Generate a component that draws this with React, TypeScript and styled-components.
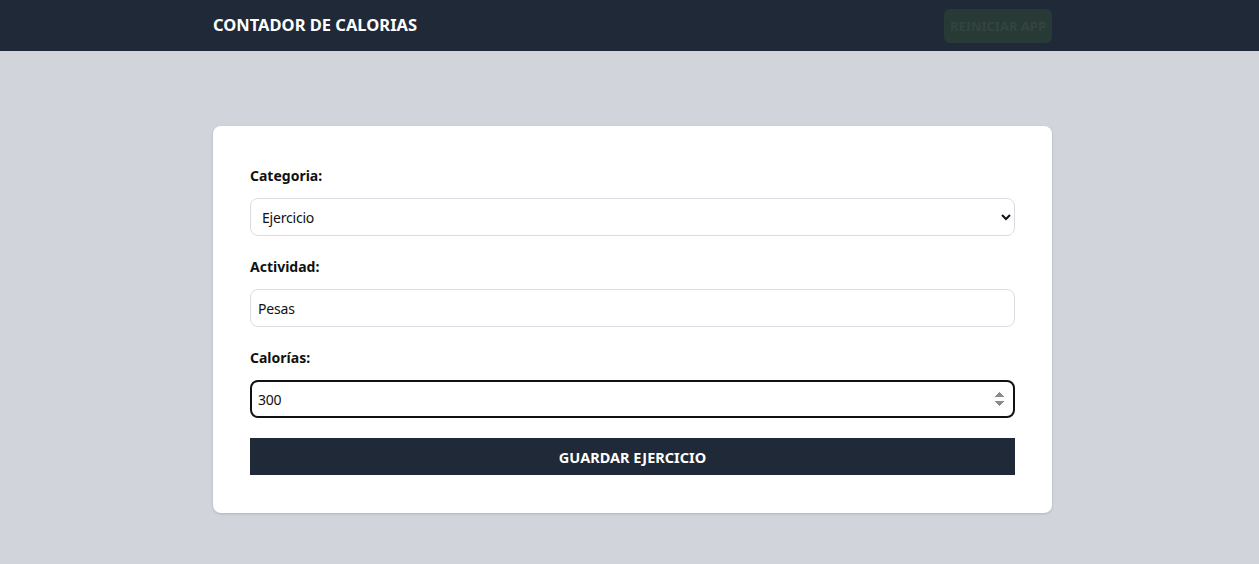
import React, { useState } from "react";
import styled, { createGlobalStyle } from "styled-components";

const GlobalStyle = createGlobalStyle`
  * { box-sizing: border-box; }
  html, body { margin: 0; padding: 0; }
  body {
    background: #d1d5db;
    font-family: "Noto Sans", "Open Sans", sans-serif;
    color: #111827;
    min-height: 100vh;
  }
`;

const Header = styled.header`
  background: #1f2937;
  height: 51px;
  padding-left: 6px;
`;

const HeaderInner = styled.div`
  width: 839px;
  margin: 0 auto;
  height: 100%;
  display: flex;
  align-items: center;
  justify-content: space-between;
  padding-bottom: 3px;
`;

const Title = styled.h1`
  margin: 0;
  color: #ffffff;
  font-size: 16.5px;
  font-weight: 700;
`;

const ResetButton = styled.button`
  width: 108px;
  height: 34px;
  margin-top: 3px;
  border: none;
  border-radius: 6px;
  background: #283a36;
  color: #34443f;
  font-family: inherit;
  font-weight: 700;
  font-size: 13px;
  text-transform: uppercase;
  cursor: default;
`;

const Main = styled.main`
  display: flex;
  justify-content: center;
  padding-top: 75px;
  padding-left: 6px;
`;

const Card = styled.form`
  width: 839px;
  background: #ffffff;
  border-radius: 8px;
  box-shadow: 0 1px 3px rgba(0, 0, 0, 0.1), 0 1px 2px rgba(0, 0, 0, 0.06);
  padding: 40px 37px 38px;
  display: flex;
  flex-direction: column;
  gap: 21px;
`;

const Field = styled.div`
  display: flex;
  flex-direction: column;
  gap: 12px;
`;

const Label = styled.label`
  font-size: 14px;
  line-height: 20px;
  font-weight: 700;
  color: #111111;
`;

const controlBase = `
  width: 100%;
  height: 38px;
  font-family: "Noto Sans", "Open Sans", sans-serif;
  font-size: 14px;
  color: #111111;
  background: #ffffff;
  border-radius: 8px;
  outline: none;
  letter-spacing: -0.2px;
`;

const Select = styled.select`
  ${controlBase}
  border: 1px solid #d9dde3;
  padding: 0 7px;
`;

const Input = styled.input<{ $focused?: boolean }>`
  ${controlBase}
  border: ${(p) => (p.$focused ? "2px solid #111111" : "1px solid #d9dde3")};
  padding: ${(p) => (p.$focused ? "0 6px" : "0 7px")};

  &::-webkit-inner-spin-button,
  &::-webkit-outer-spin-button {
    opacity: 1;
  }
`;

const Submit = styled.button`
  margin-top: -1px;
  height: 37px;
  width: 100%;
  border: none;
  background: #1f2937;
  color: #ffffff;
  font-family: inherit;
  font-size: 14.5px;
  font-weight: 700;
  text-transform: uppercase;
  cursor: pointer;
`;

export default function App() {
  const [category, setCategory] = useState("2");
  const [activity, setActivity] = useState("Pesas");
  const [calories, setCalories] = useState("300");

  return (
    <>
      <GlobalStyle />
      <Header>
        <HeaderInner>
          <Title>CONTADOR DE CALORIAS</Title>
          <ResetButton disabled>Reiniciar App</ResetButton>
        </HeaderInner>
      </Header>
      <Main>
        <Card onSubmit={(e) => e.preventDefault()}>
          <Field>
            <Label htmlFor="category">Categoria:</Label>
            <Select
              id="category"
              value={category}
              onChange={(e) => setCategory(e.target.value)}
            >
              <option value="1">Comida</option>
              <option value="2">Ejercicio</option>
            </Select>
          </Field>
          <Field>
            <Label htmlFor="activity">Actividad:</Label>
            <Input
              id="activity"
              type="text"
              value={activity}
              onChange={(e) => setActivity(e.target.value)}
            />
          </Field>
          <Field>
            <Label htmlFor="calories">Calorías:</Label>
            <Input
              id="calories"
              type="number"
              $focused
              value={calories}
              onChange={(e) => setCalories(e.target.value)}
            />
          </Field>
          <Submit type="submit">Guardar Ejercicio</Submit>
        </Card>
      </Main>
    </>
  );
}
